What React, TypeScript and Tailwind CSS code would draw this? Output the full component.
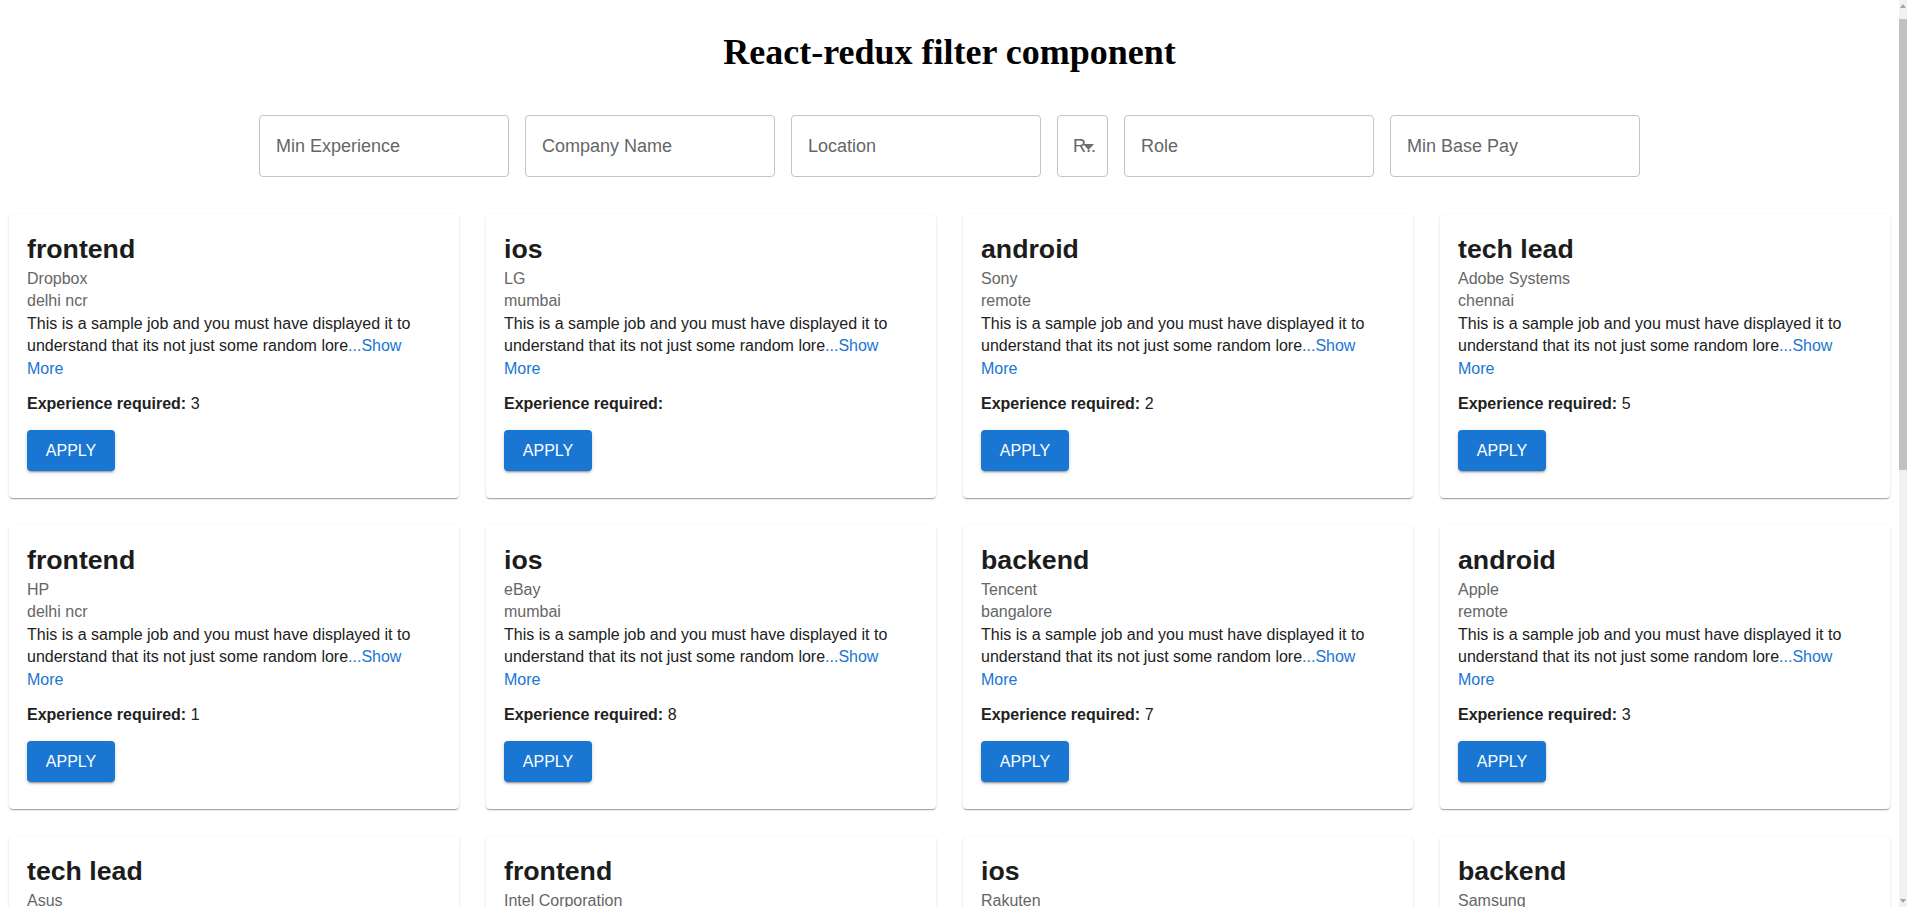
import React from "react";

type Job = {
    role: string;
    company: string;
    location: string;
    exp: number | null;
};

const jobs: Job[] = [
    { role: "frontend", company: "Dropbox", location: "delhi ncr", exp: 3 },
    { role: "ios", company: "LG", location: "mumbai", exp: null },
    { role: "android", company: "Sony", location: "remote", exp: 2 },
    { role: "tech lead", company: "Adobe Systems", location: "chennai", exp: 5 },
    { role: "frontend", company: "HP", location: "delhi ncr", exp: 1 },
    { role: "ios", company: "eBay", location: "mumbai", exp: 8 },
    { role: "backend", company: "Tencent", location: "bangalore", exp: 7 },
    { role: "android", company: "Apple", location: "remote", exp: 3 },
    { role: "tech lead", company: "Asus", location: "remote", exp: 6 },
    { role: "frontend", company: "Intel Corporation", location: "chennai", exp: 4 },
    { role: "ios", company: "Rakuten", location: "delhi ncr", exp: 2 },
    { role: "backend", company: "Samsung", location: "bangalore", exp: 5 },
    { role: "android", company: "Microsoft", location: "mumbai", exp: 1 },
    { role: "backend", company: "Google", location: "remote", exp: 9 },
    { role: "frontend", company: "Amazon", location: "bangalore", exp: 2 },
    { role: "tech lead", company: "Netflix", location: "delhi ncr", exp: 7 },
    { role: "ios", company: "Cisco", location: "chennai", exp: 3 },
    { role: "backend", company: "Oracle", location: "mumbai", exp: 4 },
    { role: "android", company: "Xiaomi", location: "bangalore", exp: 6 },
    { role: "frontend", company: "Spotify", location: "remote", exp: 0 },
];

const inputCls =
    "w-[250px] h-[62px] rounded-[4px] border border-[#c4c4c4] px-[16px] text-[18px] text-[#212121] placeholder:text-[#666666] outline-none bg-white";

const JobCard: React.FC<{ job: Job }> = ({ job }) => {
    return (
        <div className="bg-white rounded-[4px] h-[284px] px-[18px] pt-[18px] shadow-[0px_2px_1px_-1px_rgba(0,0,0,0.2),0px_1px_1px_0px_rgba(0,0,0,0.14),0px_1px_3px_0px_rgba(0,0,0,0.12)]">
            <h2 className="text-[26.7px] leading-[35.6px] font-bold text-[#1c1c1c]">{job.role}</h2>
            <p className="text-[16px] leading-[22.5px] text-[#666666]">{job.company}</p>
            <p className="text-[16px] leading-[22.5px] text-[#666666]">{job.location}</p>
            <p className="text-[16px] leading-[22.5px] text-[#212121]">
                This is a sample job and you must have displayed it to understand that its not just some random lore
                <a href="#" className="text-[#1976d2]">...Show More</a>
            </p>
            <p className="mt-[13px] text-[16px] leading-[22.5px] text-[#212121]">
                <span className="font-bold">Experience required:</span> {job.exp ?? ""}
            </p>
            <button className="mt-[14.5px] h-[41px] w-[88px] rounded-[4px] bg-[#1976d2] text-white text-[16px] shadow-[0px_3px_1px_-2px_rgba(0,0,0,0.2),0px_2px_2px_0px_rgba(0,0,0,0.14),0px_1px_5px_0px_rgba(0,0,0,0.12)]">
                APPLY
            </button>
        </div>
    );
};

const App: React.FC = () => {
    return (
        <div className="flex h-screen bg-white font-['Liberation_Sans',Arial,sans-serif]">
            <main className="flex-1 overflow-hidden pb-[13px]">
                <h1 className="pt-[32px] text-center text-[36px] leading-[41px] font-bold text-black font-['Liberation_Serif','Times_New_Roman',serif]">
                    React-redux filter component
                </h1>
                <div className="mt-[42px] flex justify-center gap-4">
                    <input className={inputCls} placeholder="Min Experience" />
                    <input className={inputCls} placeholder="Company Name" />
                    <input className={inputCls} placeholder="Location" />
                    <div className="relative w-[51px] h-[62px] rounded-[4px] border border-[#c4c4c4] bg-white">
                        <span className="absolute left-[15px] top-[19px] text-[18px] leading-[22px] text-[#666666]">R..</span>
                        <svg className="absolute left-[25px] top-[28px]" width="11" height="6" viewBox="0 0 11 6">
                            <path d="M0 0 L11 0 L5.5 6 Z" fill="#6e6e6e" />
                        </svg>
                    </div>
                    <input className={inputCls} placeholder="Role" />
                    <input className={inputCls} placeholder="Min Base Pay" />
                </div>
                <div className="mt-[37px] grid grid-cols-4 gap-[27px] px-[9px]">
                    {jobs.map((job, i) => (
                        <JobCard key={i} job={job} />
                    ))}
                </div>
            </main>
            {/* scrollbar */}
            <div className="w-[8px] shrink-0 bg-[#f1f1f1] flex flex-col items-center">
                <svg className="mt-[4px]" width="6" height="4" viewBox="0 0 6 4">
                    <path d="M0 4 L6 4 L3 0 Z" fill="#a3a3a3" />
                </svg>
                <div className="mt-[11px] w-full h-[451px] bg-[#c1c1c1]" />
                <div className="flex-1" />
                <svg className="mb-[4px]" width="6" height="4" viewBox="0 0 6 4">
                    <path d="M0 0 L6 0 L3 4 Z" fill="#a3a3a3" />
                </svg>
            </div>
        </div>
    );
};

export default App;
